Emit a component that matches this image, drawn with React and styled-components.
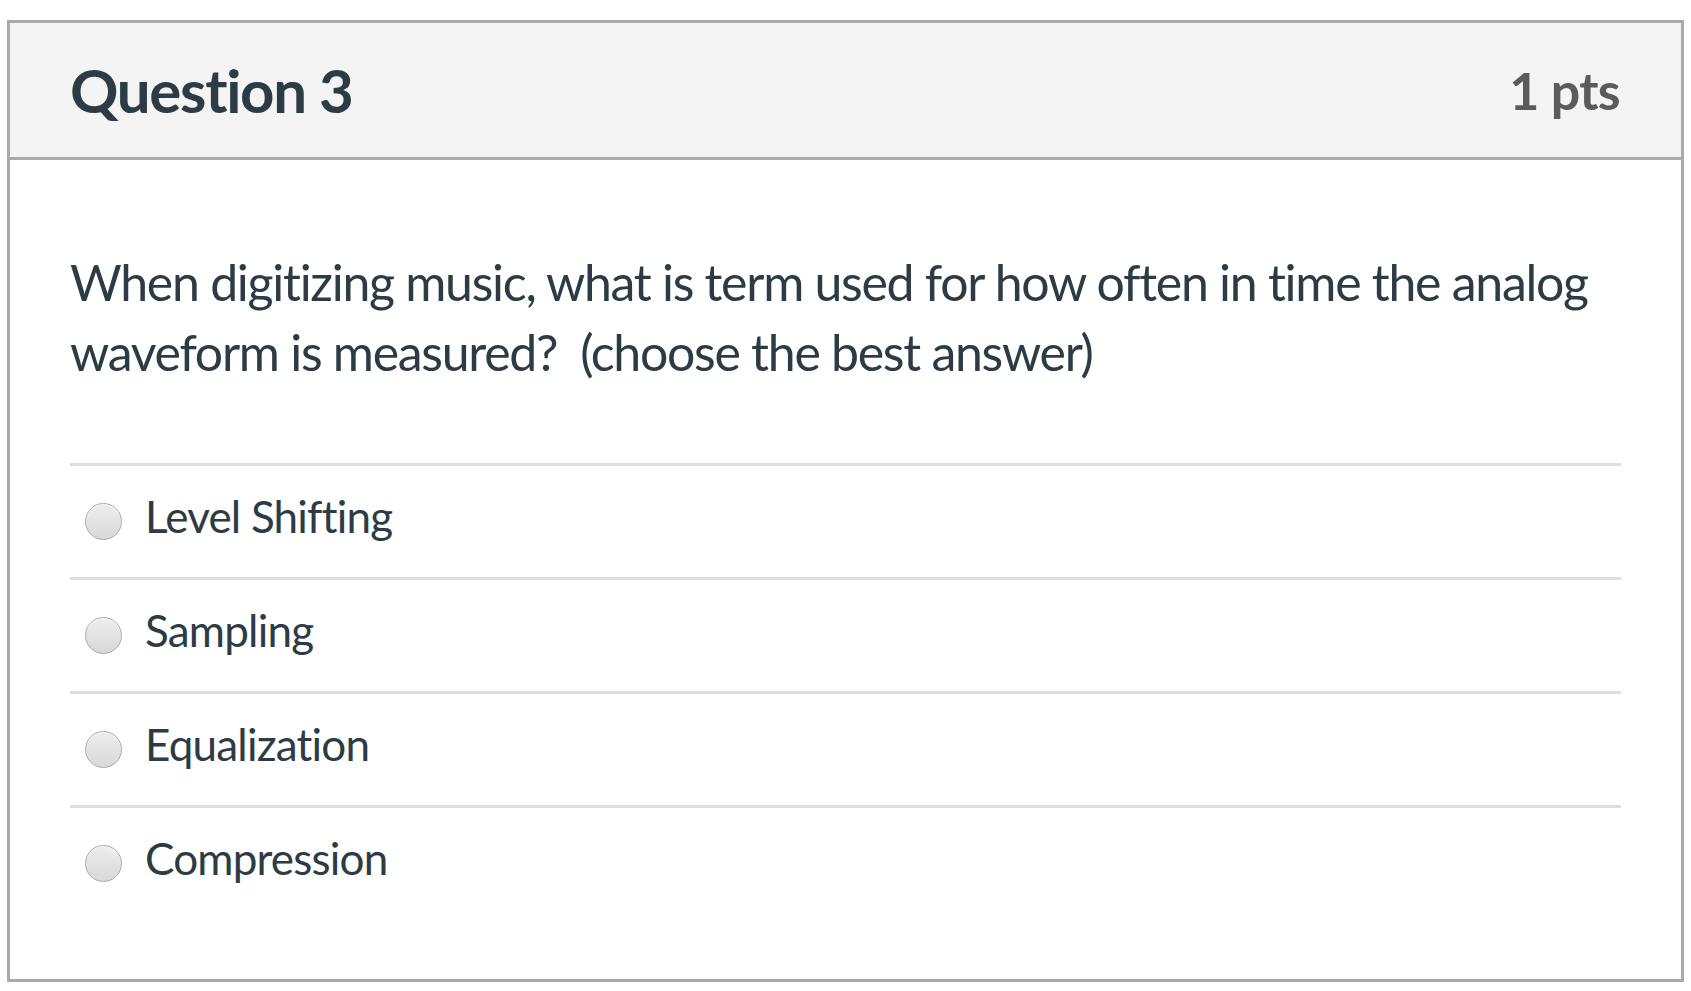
import React from 'react';
import styled, { createGlobalStyle } from 'styled-components';

const answers = ['Level Shifting', 'Sampling', 'Equalization', 'Compression'];

function App() {
  return (
    <>
      <GlobalStyle />
      <Card>
        <Header>
          <Title>Question 3</Title>
          <Points>1 pts</Points>
        </Header>
        <Body>
          <QuestionText>
            When digitizing music, what is term used for how often in time the analog
            waveform is measured?&nbsp; (choose the best answer)
          </QuestionText>
          <AnswerList>
            {answers.map((a) => (
              <Answer key={a}>
                <Radio />
                <AnswerLabel>{a}</AnswerLabel>
              </Answer>
            ))}
          </AnswerList>
        </Body>
      </Card>
    </>
  );
}

const GlobalStyle = createGlobalStyle`
  body {
    margin: 20px 7px 0;
    background: #fff;
    font-family: Lato, "Open Sans", sans-serif;
    color: #2d3b45;
  }
`;

const Card = styled.div`
  border: 3px solid #aaaaaa;
  background: #fff;
`;

const Header = styled.div`
  height: 134px;
  display: flex;
  align-items: center;
  justify-content: space-between;
  padding: 0 61px 0 60px;
  background: #f4f4f4;
  border-bottom: 3px solid #aaaaaa;
`;

const Title = styled.h2`
  margin: 0;
  font-size: 60px;
  font-weight: 700;
  color: #2d3b45;
  letter-spacing: -1.3px;
`;

const Points = styled.div`
  font-size: 52px;
  font-weight: 700;
  color: #5b5b5b;
  letter-spacing: -0.7px;
`;

const Body = styled.div`
  padding: 87px 60px 60px;
`;

const QuestionText = styled.p`
  margin: 0 0 76px;
  font-size: 50px;
  line-height: 70px;
  letter-spacing: -1.28px;
  color: #2d3b45;
`;

const AnswerList = styled.div`
  display: flex;
  flex-direction: column;
`;

const Answer = styled.label`
  display: flex;
  align-items: center;
  height: 111px;
  padding-left: 15px;
  border-top: 3px solid #dddddd;
`;

const Radio = styled.span`
  width: 35px;
  height: 35px;
  border-radius: 50%;
  border: 1.5px solid #ababab;
  background: linear-gradient(#eeeeee, #d8d8d8);
  box-shadow: inset 0 1px 0 #f8f8f8;
  flex-shrink: 0;
`;

const AnswerLabel = styled.span`
  margin: 0 0 12px 23px;
  font-size: 44px;
  letter-spacing: -0.8px;
  color: #2d3b45;
`;

export default App;
